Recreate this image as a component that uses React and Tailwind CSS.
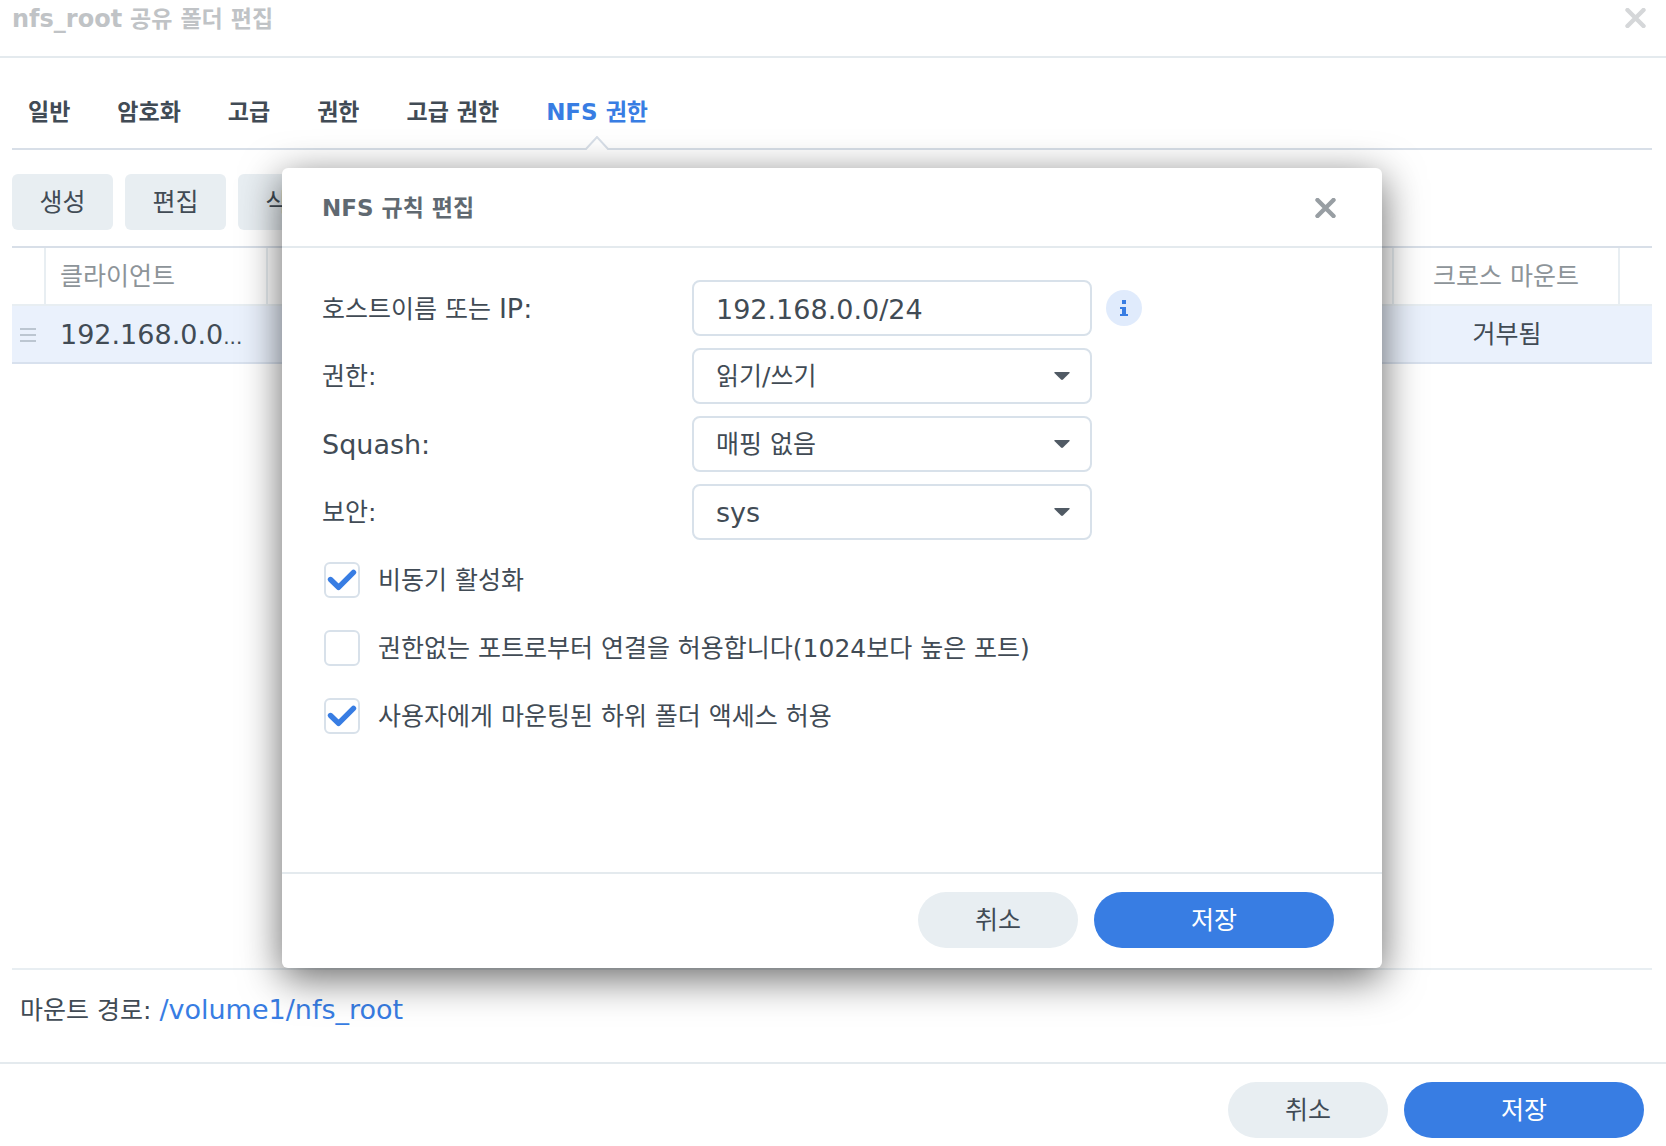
import { useState } from "react";

const tabs = ["일반", "암호화", "고급", "권한", "고급 권한", "NFS 권한"];

const selects = [
    { id: "privilege", label: "권한:", labelSize: "text-[25px]", value: "읽기/쓰기", size: "text-[25px]" },
    { id: "squash", label: "Squash:", labelSize: "text-[27px]", value: "매핑 없음", size: "text-[25px]" },
    { id: "security", label: "보안:", labelSize: "text-[25px]", value: "sys", size: "text-[27px]" },
];

const options = [
    { id: "async", label: "비동기 활성화", checked: true },
    {
        id: "ports",
        label: "권한없는 포트로부터 연결을 허용합니다(1024보다 높은 포트)",
        checked: false,
    },
    {
        id: "subfolders",
        label: "사용자에게 마운팅된 하위 폴더 액세스 허용",
        checked: true,
    },
];

const fieldClass =
    "h-14 w-full appearance-none rounded-lg border-2 border-[#d8e1ea] bg-white px-[22px] pt-0.5 text-[#414b55] outline-none";

function CloseIcon() {
    return (
        <svg viewBox="0 0 21 20" className="h-5 w-[21px]" fill="none" stroke="currentColor" strokeWidth="4.4" strokeLinecap="round">
            <path d="M2.5 2 18.5 18M18.5 2 2.5 18" />
        </svg>
    );
}

function DialogButtons() {
    return (
        <div className="flex justify-end gap-4">
            <button
                type="button"
                className="h-14 w-40 rounded-full bg-[#e8eef2] pt-0.5 text-[25px] text-[#414b55]"
            >
                취소
            </button>
            <button
                type="button"
                className="h-14 w-60 rounded-full bg-[#387de3] pt-0.5 text-[25px] text-white"
            >
                저장
            </button>
        </div>
    );
}

function RuleDialog() {
    const [checks, setChecks] = useState(
        Object.fromEntries(options.map((option) => [option.id, option.checked]))
    );

    return (
        <div
            role="dialog"
            aria-labelledby="rule-title"
            className="flex min-h-[800px] w-[1100px] flex-col rounded-md bg-white shadow-[0_10px_40px_rgba(0,0,0,0.6)]"
        >
            <div className="flex h-20 items-center justify-between border-b-2 border-[#e4eaee] pt-0.5 pr-[46px] pl-10">
                <h2 id="rule-title" className="text-[23px] font-bold text-[#606971]">
                    NFS 규칙 편집
                </h2>
                <button type="button" aria-label="닫기" className="text-[#989ea3]">
                    <CloseIcon />
                </button>
            </div>

            <div className="flex-1 px-10 pt-8">
                <div className="space-y-3">
                    <div className="flex items-center">
                        <label htmlFor="host" className="w-[370px] pt-0.5 text-[25px] leading-9">
                            호스트이름 또는 <span className="text-[27px]">IP:</span>
                        </label>
                        <div className="w-[400px]">
                            <input
                                id="host"
                                type="text"
                                defaultValue="192.168.0.0/24"
                                className={`${fieldClass} text-[27px]`}
                            />
                        </div>
                        <button
                            type="button"
                            aria-label="정보"
                            className="ml-3.5 grid size-9 place-items-center rounded-full bg-[#e0ebfc] text-[#387de3]"
                        >
                            <svg viewBox="0 0 8 16" className="h-4 w-2" fill="currentColor">
                                <path d="M2 0h4v4H2zM0 7h6v7h2v2H0v-2h2V9H0z" />
                            </svg>
                        </button>
                    </div>

                    {selects.map((item) => (
                        <div key={item.id} className="flex items-center">
                            <label
                                htmlFor={item.id}
                                className={`w-[370px] pt-0.5 leading-9 ${item.labelSize}`}
                            >
                                {item.label}
                            </label>
                            <div className="relative w-[400px]">
                                <select id={item.id} className={`${fieldClass} ${item.size}`}>
                                    <option>{item.value}</option>
                                </select>
                                <svg
                                    viewBox="0 0 16 8"
                                    className="pointer-events-none absolute top-6 right-[22px] h-2 w-4"
                                    fill="#505a64"
                                >
                                    <path d="M1 0h14q1 0 .6 1L9 7.5q-1 .8-2 0L.4 1Q0 0 1 0z" />
                                </svg>
                            </div>
                        </div>
                    ))}
                </div>

                <div className="mt-3">
                    {options.map((option) => (
                        <div key={option.id} className="flex h-17 items-start pt-2.5 pl-0.5">
                            <div className="relative size-9">
                                <input
                                    id={option.id}
                                    type="checkbox"
                                    checked={checks[option.id]}
                                    onChange={(e) =>
                                        setChecks({ ...checks, [option.id]: e.target.checked })
                                    }
                                    className="block size-9 appearance-none rounded-md border-2 border-[#d8e1ea] bg-white"
                                />
                                {checks[option.id] && (
                                    <svg
                                        viewBox="0 0 36 36"
                                        className="pointer-events-none absolute inset-0"
                                        fill="none"
                                        stroke="#387de3"
                                        strokeWidth="5.4"
                                        strokeLinecap="round"
                                        strokeLinejoin="round"
                                    >
                                        <path d="M6.5 17.5 14.5 25.3 29.5 10.3" />
                                    </svg>
                                )}
                            </div>
                            <label htmlFor={option.id} className="pl-[18px] text-[25px] leading-[38px]">
                                {option.label}
                            </label>
                        </div>
                    ))}
                </div>
            </div>

            <div className="border-t-2 border-[#e4eaee] px-12 pt-[18px] pb-5">
                <DialogButtons />
            </div>
        </div>
    );
}

export default function App() {
    return (
        <div className="relative flex min-h-screen flex-col bg-white font-['DejaVu_Sans','Noto_Sans_CJK_KR',sans-serif] text-[#414b55]">
            {/* HEADER */}
            <div className="flex h-[58px] items-start justify-between border-b-2 border-[#e4eaee] pr-5 pl-3">
                <h1 className="text-[23px] leading-[38px] font-bold text-[#c0c3c6]">
                    <span className="text-2xl leading-9">nfs_root</span> 공유 폴더 편집
                </h1>
                <button type="button" aria-label="창 닫기" className="mt-2 text-[#d5d7d9]">
                    <CloseIcon />
                </button>
            </div>

            <div className="flex flex-1 flex-col pr-3.5 pl-3">
                {/* TABS */}
                <div role="tablist" className="flex h-[92px] gap-[47px] border-b-2 border-[#d8dfe8] px-4">
                    {tabs.map((tab, idx) => {
                        const active = idx === tabs.length - 1;
                        return (
                            <button
                                key={tab}
                                type="button"
                                role="tab"
                                aria-selected={active}
                                className={`relative pt-[18px] text-[23px] font-bold ${
                                    active ? "text-[#387de3]" : ""
                                }`}
                            >
                                {tab}
                                {active && (
                                    <svg
                                        viewBox="0 0 24 14"
                                        className="absolute -bottom-0.5 left-1/2 h-3.5 w-6 -translate-x-1/2"
                                    >
                                        <path d="M0 14 12 1l12 13z" fill="#fff" />
                                        <path d="M0 13h1L12 1l11 12h1" fill="none" stroke="#d8dfe8" strokeWidth="2" />
                                    </svg>
                                )}
                            </button>
                        );
                    })}
                </div>

                {/* TOOLBAR */}
                <div className="flex gap-3 pt-6 pb-4">
                    {["생성", "편집", "삭제"].map((label) => (
                        <button
                            key={label}
                            type="button"
                            className="h-14 w-[101px] rounded-md bg-[#e8eef2] pt-0.5 text-[25px]"
                        >
                            {label}
                        </button>
                    ))}
                </div>

                {/* RULES */}
                <div className="flex-1 border-t-2 border-b-2 border-t-[#d8dfe8] border-b-[#e8eef2]">
                    <table className="w-full table-fixed border-separate border-spacing-0">
                        <thead>
                            <tr className="h-14 text-[25px] text-[#8d9499] *:pt-0.5">
                                <th className="w-[34px] border-r-2 border-[#e8eef2]" />
                                <th className="w-[222px] border-r-2 border-[#e8eef2] pl-3.5 text-left font-normal">
                                    클라이언트
                                </th>
                                <th className="border-r-2 border-[#e8eef2]" />
                                <th className="w-[226px] border-r-2 border-[#e8eef2] text-center font-normal">
                                    크로스 마운트
                                </th>
                                <th className="w-8" />
                            </tr>
                        </thead>
                        <tbody>
                            <tr className="h-[60px] bg-[#eaf1fc] *:border-t-2 *:border-b-2 *:border-t-[#e8eef2] *:border-b-[#d8e1ee] *:pt-0.5">
                                <td className="pl-2">
                                    <svg viewBox="0 0 16 14" className="h-3.5 w-4" fill="#bcc6d1">
                                        <path d="M0 0h16v2H0zM0 6h16v2H0zM0 12h16v2H0z" />
                                    </svg>
                                </td>
                                <td className="pl-3.5 text-[27px] leading-9">
                                    192.168.0.0<span className="text-xl">...</span>
                                </td>
                                <td />
                                <td className="text-center text-[25px]">거부됨</td>
                                <td />
                            </tr>
                        </tbody>
                    </table>
                </div>

                {/* MOUNT PATH */}
                <div className="flex h-[92px] items-baseline gap-2 px-2 pt-[22px] leading-9">
                    <span className="text-[25px]">마운트 경로:</span>
                    <a href="#volume" className="text-[27px] text-[#387de3]">
                        /volume1/nfs_root
                    </a>
                </div>
            </div>

            {/* FOOTER */}
            <div className="border-t-2 border-[#e4eaee] pt-[18px] pr-[22px] pb-2">
                <DialogButtons />
            </div>

            <div className="absolute inset-0 flex items-start justify-center pt-42 pr-0.5">
                <RuleDialog />
            </div>
        </div>
    );
}
